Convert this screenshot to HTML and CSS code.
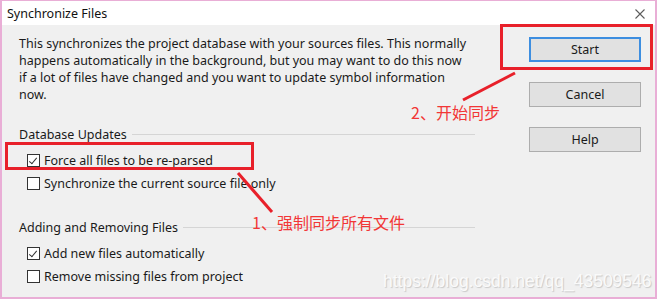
FILE: index.html
```html
<!DOCTYPE html>
<html lang="en">
<head>
  <meta charset="UTF-8" />
  <title>Synchronize Files</title>
  <link rel="stylesheet" href="styles.css">
</head>
<body>

<div class="screen">
  <div class="window">
    <div class="titlebar">
      <span class="title">Synchronize Files</span>
      <svg class="close" width="10" height="10" viewBox="0 0 10 10"><path d="M0.5 0.5L9.5 9.5M9.5 0.5L0.5 9.5" stroke="#5c5c5c" stroke-width="1.1" fill="none"/></svg>
    </div>
    <div class="content">
      <div class="main">
        <p class="intro">This synchronizes the project database with your sources files. This normally<br>
          happens automatically in the background, but you may want to do this now<br>
          if a lot of files have changed and you want to update symbol information<br>
          now.</p>

        <div class="group">
          <div class="group-title">Database Updates</div>
          <label class="check"><span class="box checked"></span>Force all files to be re-parsed</label>
          <label class="check"><span class="box"></span>Synchronize the current source file only</label>
        </div>

        <div class="group">
          <div class="group-title">Adding and Removing Files</div>
          <label class="check"><span class="box checked"></span>Add new files automatically</label>
          <label class="check"><span class="box"></span>Remove missing files from project</label>
        </div>
      </div>
      <div class="buttons">
        <button class="btn default">Start</button>
        <button class="btn">Cancel</button>
        <button class="btn">Help</button>
      </div>
    </div>
  </div>

  <!-- annotations drawn on top of the screenshot -->
  <div class="mark mark-force"></div>
  <div class="mark mark-start"></div>
  <svg class="arrows" width="659" height="301">
    <line x1="238" y1="173" x2="272" y2="212" stroke="#e8202a" stroke-width="3"/>
    <line x1="515" y1="73" x2="463" y2="100" stroke="#e8202a" stroke-width="3"/>
  </svg>
  <div class="note note-1">1、强制同步所有文件</div>
  <div class="note note-2">2、开始同步</div>
  <div class="watermark">https://blog.csdn.net/qq_43509546</div>
</div>

</body>
</html>
```

FILE: styles.css
```css
body { margin: 0; background: #fff; font-family: "Noto Sans", "Open Sans", sans-serif; font-size: 12.5px; color: #1a1a1a; }
.screen { position: relative; width: 659px; height: 301px; overflow: hidden; }
.window { width: 657px; height: 299px; box-sizing: border-box; border: 2px solid #e9aed6; border-top-width: 1px; background: #f0f0f0; display: flex; flex-direction: column; }
.titlebar { height: 24px; background: #fff; display: flex; align-items: center; justify-content: space-between; padding: 0 10px 0 5px; }
.title { font-size: 12.5px; color: #111; }
.close { margin-top: 1px; }
.content { flex: 1; display: flex; padding: 10px 0 0 17px; }
.main { width: 456px; }
.intro { margin: 0; line-height: 17px; white-space: nowrap; }
.group { margin-top: 23px; }
.group + .group { margin-top: 24px; }
.group-title { display: flex; align-items: center; gap: 5px; height: 17px; }
.group-title::after { content: ""; flex: 1; border-top: 1px solid #d5d5d5; }
.check { display: flex; align-items: center; gap: 4px; height: 23px; padding-left: 8px; }
.group-title + .check { margin-top: 6px; }
.box { width: 13px; height: 13px; box-sizing: border-box; border: 1px solid #333; background: #fff; position: relative; }
.box.checked::after { content: ""; position: absolute; left: 3px; top: 1px; width: 3px; height: 7px; border: solid #333; border-width: 0 1px 1px 0; transform: rotate(40deg); }
.buttons { display: flex; flex-direction: column; gap: 20px; margin-left: 54px; padding-top: 2px; }
.btn { width: 112px; height: 25px; background: #e1e1e1; border: 1px solid #adadad; font-family: inherit; font-size: 12.5px; color: #1a1a1a; padding: 0; }
.btn.default { border: 2px solid #3d8ee0; }
.mark { position: absolute; border: 3px solid #e8202a; box-sizing: border-box; }
.mark-force { left: 5px; top: 142px; width: 249px; height: 28px; }
.mark-start { left: 500px; top: 24px; width: 153px; height: 46px; }
.arrows { position: absolute; left: 0; top: 0; }
.note { position: absolute; color: #f23636; font-family: "Noto Sans CJK SC", sans-serif; font-size: 16px; line-height: 20px; }
.note-1 { left: 252px; top: 212px; }
.note-2 { left: 411px; top: 102px; }
.watermark { position: absolute; left: 383px; top: 271px; font-family: "Liberation Sans", sans-serif; font-size: 17.5px; color: #fafafa; text-shadow: 1px 1px 1px #c8c8c8; }
```
